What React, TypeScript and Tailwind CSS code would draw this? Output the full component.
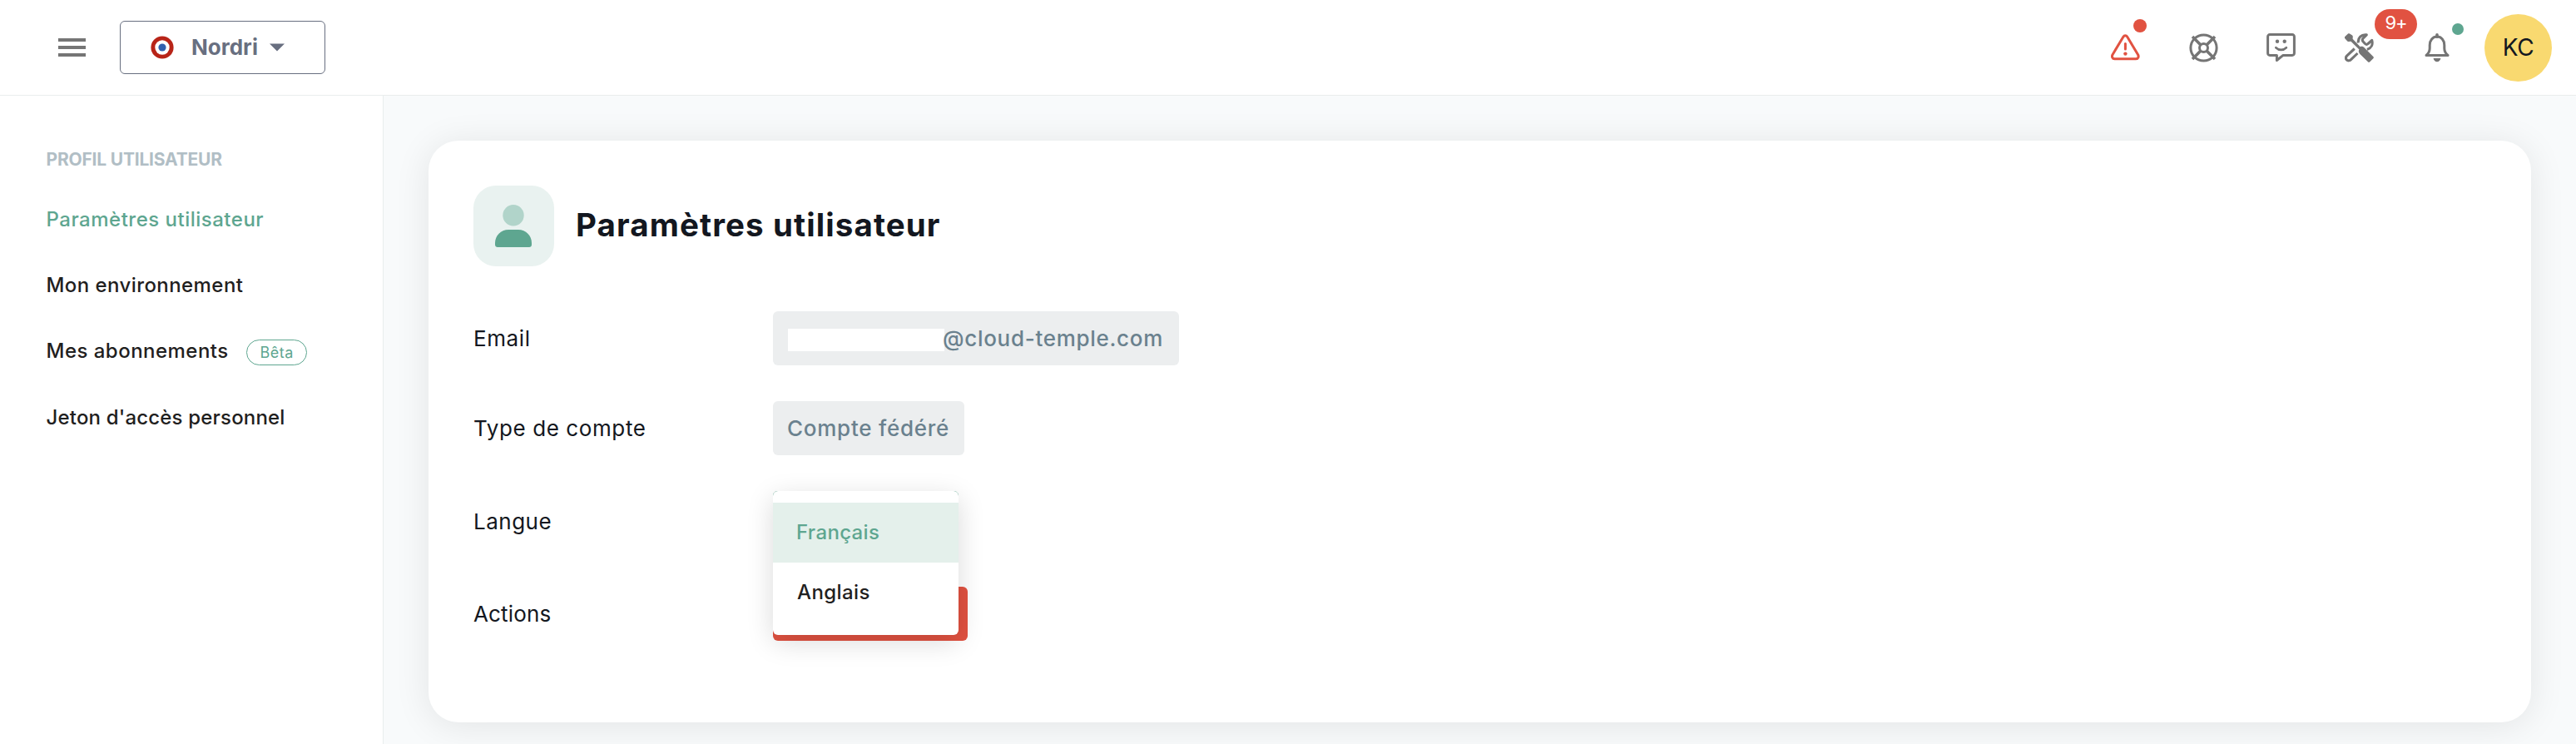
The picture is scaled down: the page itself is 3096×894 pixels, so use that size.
import type { ReactNode } from 'react';

function HamburgerIcon() {
  return (
    <svg width="33" height="22" viewBox="0 0 33 22" fill="#757575">
      <rect width="33" height="4" />
      <rect y="9" width="33" height="4" />
      <rect y="18" width="33" height="4" />
    </svg>
  );
}

function RoundelIcon() {
  return (
    <svg width="28" height="28" viewBox="0 0 28 28">
      <circle cx="14" cy="14" r="13.6" fill="#b82418" />
      <circle cx="14" cy="14" r="8.7" fill="#fff" />
      <circle cx="14" cy="14" r="4.6" fill="#3060ae" />
    </svg>
  );
}

function WarningIcon() {
  return (
    <svg width="35" height="35" viewBox="0 0 35 35" fill="none" stroke="#e15241" strokeLinecap="round" strokeLinejoin="round">
      <path d="M14.9 4.2 2 25.7C.8 28 1.800 30.700 4.400 30.700h25.800c2.600 0 3.600-2.700 2.400-5L19.700 4.200c-1.200-2.100-3.600-2.100-4.800 0Z" strokeWidth="3" />
      <path d="M17.400 12.500v6.500" strokeWidth="3" />
      <circle cx="17.400" cy="24.600" r="2.200" fill="#e15241" stroke="none" />
    </svg>
  );
}

function LifebuoyIcon() {
  return (
    <svg width="35" height="35" viewBox="0 0 35 35" fill="none" stroke="#757575" strokeWidth="3">
      <circle cx="17.500" cy="17.500" r="15.600" />
      <circle cx="17.500" cy="17.500" r="5" />
      <path d="m4 4 9.700 9.700M31 4l-9.700 9.700M4 31l9.700-9.700M31 31l-9.700-9.700" strokeWidth="3.600" />
    </svg>
  );
}

function FeedbackIcon() {
  return (
    <svg width="35" height="35" viewBox="0 0 35 35" fill="none" stroke="#757575" strokeWidth="3" strokeLinejoin="round" strokeLinecap="round">
      <path d="M4 1.600h27a2.400 2.400 0 0 1 2.400 2.400v20a2.400 2.400 0 0 1-2.400 2.400H20l-7.600 6.100v-6.100H4A2.400 2.400 0 0 1 1.600 24V4A2.400 2.400 0 0 1 4 1.600Z" />
      <path d="M11.300 17.200c3.700 3.600 8.900 3.600 12.600 0" strokeWidth="2.600" />
      <circle cx="13" cy="9.700" r="2.200" fill="#757575" stroke="none" />
      <circle cx="21.700" cy="9.700" r="2.200" fill="#757575" stroke="none" />
    </svg>
  );
}

function ToolsIcon() {
  return (
    <svg width="35" height="35" viewBox="0 0 35 35" fill="none" stroke="#757575" strokeWidth="3.100" strokeLinejoin="round">
      <path d="M16.300 11.500C15.600 5.500 20 1 26.300 1.800L22 6.200c-1 1.200-.8 2.600.2 3.800l2.300 2.500c1 1 2.600 1 3.600 0l4.600-4.200c1.500 5.400-.8 9.700-5.800 11.200" />
      <path d="m11.800 18.500-9 8.300c-1.700 1.700-1.700 3.600-.5 5 1.500 1.500 3.700 1.300 5.200-.2l8-7.600" />
      <path d="M.3 4 4 .6c.6-.6 1.300-.6 2 0l2.800 1.700c.7.400 1 1 1 1.700l-.2 2.800 9.100 9.400c1.800-.8 3.600-.2 4.900 1.100l10.700 10.600c.7.700.7 1.700 0 2.400l-4 3.900c-.7.700-1.700.7-2.400 0L18.400 25c-1.700-1.700-2-3.700-1-5.600L7.500 9.800l-3 .1c-.7 0-1.300-.4-1.700-1L.1 6.100C-.3 5.400-.3 4.600.3 4Z" fill="#757575" stroke="none" />
    </svg>
  );
}

function BellIcon() {
  return (
    <svg width="30" height="35" viewBox="0 0 30 35" fill="none" stroke="#757575" strokeWidth="3" strokeLinejoin="round">
      <path d="M2 26.500c2.500-2 4.200-4.600 4.200-8.500v-3.800C6.200 8.500 9.800 4 15 4s8.800 4.500 8.800 10.200V18c0 3.900 1.700 6.500 4.200 8.500Z" />
      <path d="M15 1.800v2.400" strokeWidth="3.600" strokeLinecap="round" />
      <path d="M10.600 30h8.800c-.5 2.600-2 4.300-4.400 4.300s-3.900-1.700-4.400-4.300Z" fill="#757575" stroke="none" />
    </svg>
  );
}

function UserIcon() {
  return (
    <svg width="44" height="51" viewBox="0 0 44 51">
      <circle cx="22" cy="12.700" r="12.700" fill="#b1d4ca" />
      <path d="M0 48v-2c0-9 7-16 16-16h12c9 0 16 7 16 16v2c0 2-1.300 3-3 3H3c-1.700 0-3-1-3-3Z" fill="#5ea690" />
    </svg>
  );
}

function Header() {
  return (
    <header className="flex h-[115px] shrink-0 items-center border-b border-[#e9eded] bg-white pl-[70px] pr-[29px]">
      <button type="button" aria-label="Menu"><HamburgerIcon /></button>
      <button type="button" className="ml-[41px] flex h-16 w-[247px] items-center rounded-md border border-[#686f80] pl-9">
        <RoundelIcon />
        <span className="ml-[21px] -mt-0.5 text-[26px] font-bold text-[#686f80]">Nordri</span>
        <svg className="ml-3.5" width="18" height="10" viewBox="0 0 18 10"><path d="M0 .5h18L9 9.500Z" fill="#686f80" /></svg>
      </button>
      <div className="ml-auto flex items-center">
        <div className="relative">
          <WarningIcon />
          <span className="absolute left-[27px] -top-[17px] size-4 rounded-full bg-[#e15241]" />
        </div>
        <div className="ml-[59px]"><LifebuoyIcon /></div>
        <div className="ml-[58px]"><FeedbackIcon /></div>
        <div className="relative ml-[59px]">
          <ToolsIcon />
          <span className="absolute -top-[29px] left-9 flex h-9 w-[51px] items-center justify-center rounded-full bg-[#e15241] pb-0.5 text-[22px] tracking-[-1px] text-white">9+</span>
        </div>
        <div className="relative ml-[61px]">
          <BellIcon />
          <span className="absolute -top-3 left-[33px] size-3.5 rounded-full bg-[#5ea690]" />
        </div>
        <div className="ml-[42px] flex size-[81px] items-center justify-center rounded-full bg-[#f9d970] text-[28px] tracking-[-0.500px] text-[#131720]">KC</div>
      </div>
    </header>
  );
}

function NavItem({ className, children }: { className: string; children: ReactNode }) {
  return <li className={`flex items-center ${className}`}>{children}</li>;
}

function Sidebar() {
  return (
    <aside className="w-[461px] shrink-0 border-r border-[#e9eded] bg-white pl-[55.500px] pt-[62px]">
      <h2 className="h-[30px] text-[21px] leading-[30px] font-bold tracking-[-0.200px] text-[#b1bec5]">PROFIL UTILISATEUR</h2>
      <ul className="mt-[18px] text-[24px] font-medium text-[#1f2020]">
        <NavItem className="h-[78px] tracking-[0.500px] text-[#5ea690]">Paramètres utilisateur</NavItem>
        <NavItem className="h-[80px] tracking-[0.430px]">Mon environnement</NavItem>
        <NavItem className="h-[77px] tracking-[0.480px]">
          Mes abonnements
          <span className="mt-[3px] ml-[21px] flex h-[31px] w-[73px] items-center justify-center rounded-full border border-[#5ea690] pl-px text-[18px] font-normal tracking-[0.500px] text-[#5ea690]">Bêta</span>
        </NavItem>
        <NavItem className="h-[84px] tracking-[0.180px]">Jeton d'accès personnel</NavItem>
      </ul>
    </aside>
  );
}

function Field({ label, className, children }: { label: string; className: string; children: ReactNode }) {
  return (
    <div className={`flex h-[65px] items-center ${className}`}>
      <div className="w-[361px] shrink-0 text-[26px] text-[#131720]">{label}</div>
      {children}
    </div>
  );
}

function LanguageMenu() {
  return (
    <div className="relative z-10 h-full">
      <div className="absolute -top-1 left-0 h-[60px] w-[223px] rounded-[5px] border border-[#5ea690]" />
      <ul className="absolute -top-1 left-0 h-[173px] w-[223px] rounded-md bg-white pt-3.5 text-[24px] font-medium shadow-[0_8px_32px_rgba(0,0,0,0.15)]">
        <li className="flex h-[72px] items-center bg-[#e4f0eb] pl-7 tracking-[0.350px] text-[#5ea690]">Français</li>
        <li className="flex h-[72px] items-center pl-[29px] tracking-[0.400px] text-[#1f2020]">Anglais</li>
      </ul>
    </div>
  );
}

export default function App() {
  return (
    <div className="flex h-[894px] w-[3096px] flex-col overflow-hidden bg-[#f8fafb] font-['Inter',sans-serif]">
      <Header />
      <div className="flex flex-1">
        <Sidebar />
        <main className="flex-1 pl-[54px] pr-[54px] pt-[54px]">
          <section className="h-[699px] rounded-[36px] bg-white pl-[54px] pt-[54px] shadow-[0_4px_44px_rgba(0,0,0,0.09)]">
            <div className="flex h-[97px] items-center">
              <div className="flex size-[97px] items-center justify-center rounded-[27px] bg-[#e9f2f0] pr-px"><UserIcon /></div>
              <h1 className="-mt-0.5 ml-[26px] text-[38.500px] font-bold tracking-[1.100px] text-[#131720]">Paramètres utilisateur</h1>
            </div>
            <Field label="Email" className="mt-[54px] tracking-[0.600px]">
              <div className="-ml-px flex h-full w-[488px] items-center rounded-md bg-[#eceeef] pl-[18px] text-[26px] font-medium tracking-[0.700px] text-[#6a818e]">
                <span className="mt-1 h-[27px] w-[188px] bg-white" />
                <span className="-ml-0.5">@cloud-temple.com</span>
              </div>
            </Field>
            <Field label="Type de compte" className="mt-[43px] tracking-[0.600px]">
              <div className="-ml-px flex h-full w-[230px] items-center rounded-md bg-[#eceeef] pl-[17px] text-[26px] font-medium tracking-[0.750px] text-[#6a818e]">Compte fédéré</div>
            </Field>
            <Field label="Langue" className="mt-[47px] tracking-[0.500px]">
              <div className="-ml-px h-full"><LanguageMenu /></div>
            </Field>
            <Field label="Actions" className="mt-[46px] tracking-[0.150px]">
              <div className="-ml-px h-full w-[234px] rounded-md bg-[#e15241]" />
            </Field>
          </section>
        </main>
      </div>
    </div>
  );
}
